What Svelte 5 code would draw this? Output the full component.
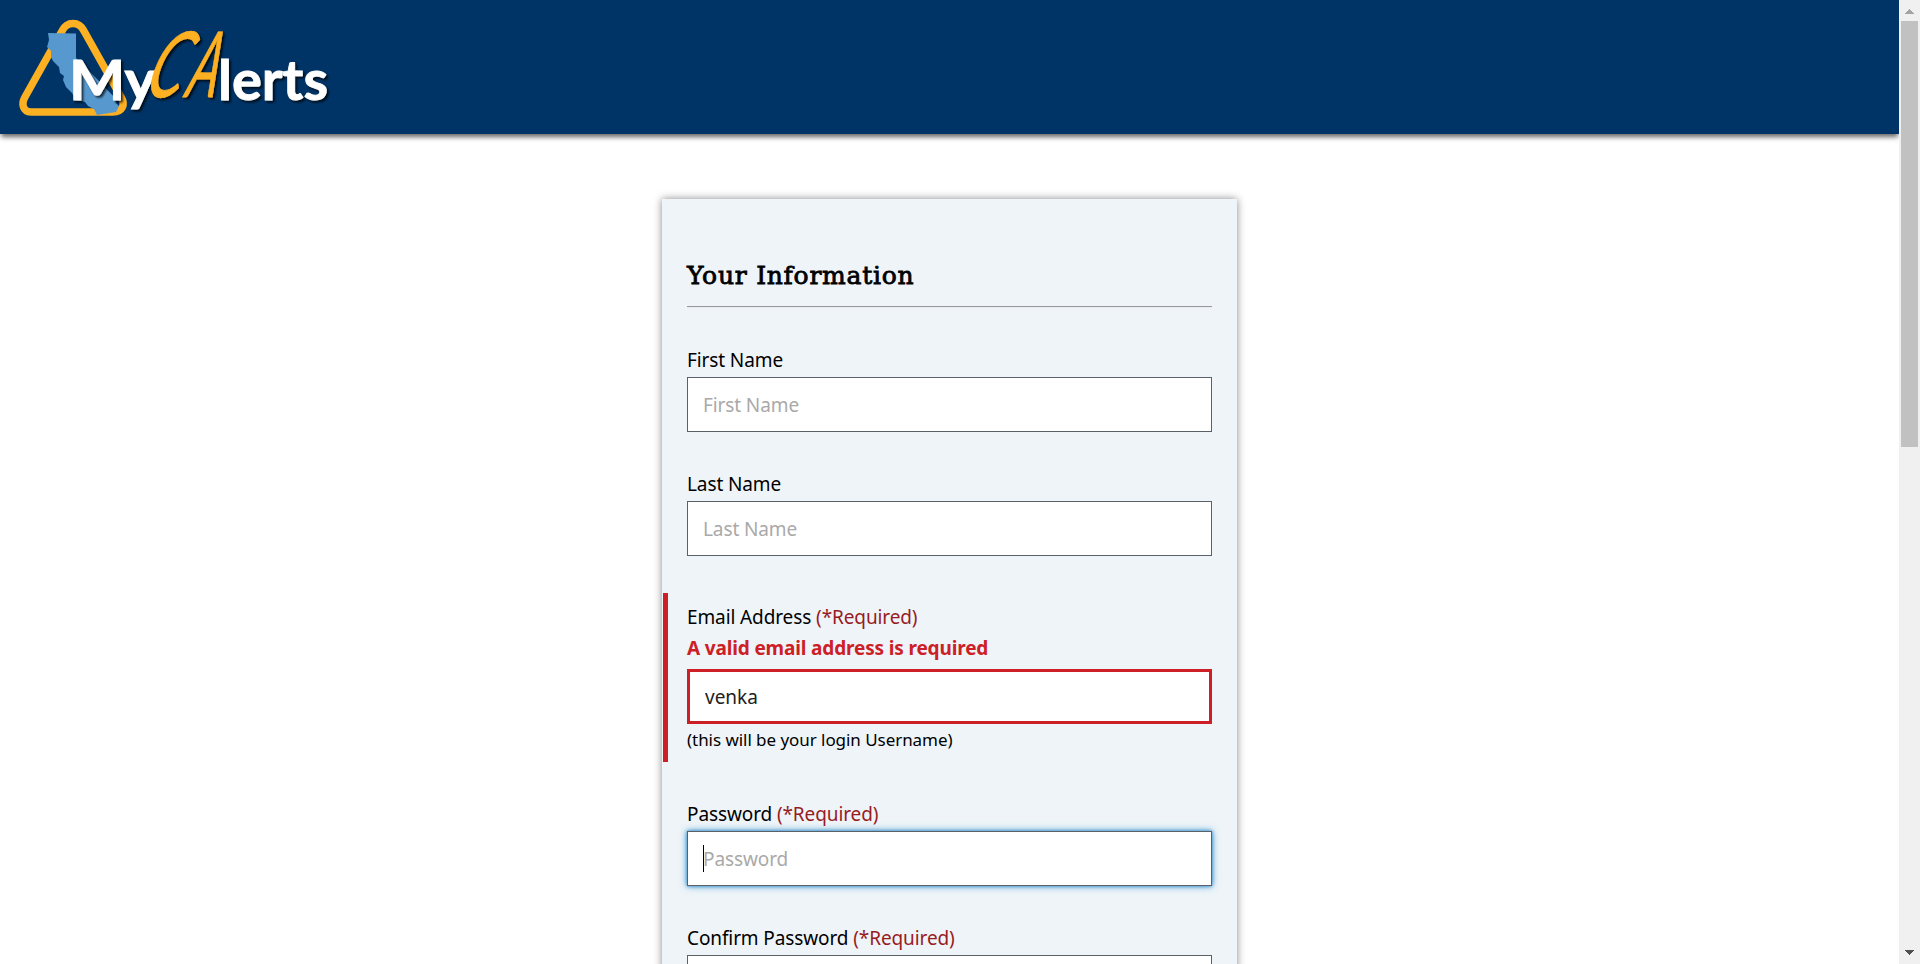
<script>
  const names = ['First Name', 'Last Name'];
</script>

<div class="window">
  <div class="page">
    <header>
      <svg class="logo" width="340" height="134" viewBox="0 0 340 134" role="img" aria-label="MyCAlerts">
        <defs>
          <filter id="drop" x="-10%" y="-10%" width="125%" height="130%">
            <feDropShadow dx="2" dy="2" stdDeviation="1.2" flood-color="#000" flood-opacity=".75" />
          </filter>
        </defs>
        <path class="triangle" d="M62 31C67 21 79 21 84 31L121 97C126 105 122 112 113 112H31C23 112 21 104 25 97Z" />
        <path class="state" d="M48 33L76 33.500V58L97 79L115 98L116 103L119 106L116 112L97 115L94 109L88 106L85 102L76 100L72 93L66 87L63 80L64 76L60 73L59 67L53 61L51 57L51 51L47 47L49 40Z" />
        <g filter="url(#drop)">
          <text class="sans" x="69" y="100" textLength="87" lengthAdjust="spacingAndGlyphs">My</text>
          <g class="script">
            <text transform="translate(142 97) skewX(-20) scale(.64 1)">C</text>
            <text transform="translate(184 97) skewX(-16) scale(.53 1)">A</text>
          </g>
          <text class="sans" x="218" y="100" textLength="110" lengthAdjust="spacingAndGlyphs">lerts</text>
        </g>
      </svg>
    </header>
    <main>
      <form>
        <h1>Your Information</h1>
        <hr />
        {#each names as name}
          <div class="field">
            <label for={name}><span>{name}</span></label>
            <input id={name} type="text" placeholder={name} />
          </div>
        {/each}
        <div class="field error">
          <label for="email"><span>Email Address</span> <span class="required">(*Required)</span></label>
          <strong>A valid email address is required</strong>
          <input id="email" type="text" value="venka" />
          <small>(this will be your login Username)</small>
        </div>
        <div class="field">
          <label for="password"><span>Password</span> <span class="required">(*Required)</span></label>
          <div class="focused">
            <input id="password" type="password" placeholder="Password" />
            <i class="caret"></i>
          </div>
        </div>
        <div class="field">
          <label for="confirm"><span>Confirm Password</span> <span class="required">(*Required)</span></label>
          <input id="confirm" type="password" />
        </div>
      </form>
    </main>
  </div>
  <div class="scrollbar">
    <svg width="21" height="21" viewBox="0 0 21 21" shape-rendering="crispEdges"><path d="M6 14L10.500 9L15 14Z" fill="#a3a3a3" /></svg>
    <div class="thumb"></div>
    <svg class="down" width="21" height="21" viewBox="0 0 21 21" shape-rendering="crispEdges"><path d="M6 7H15L10.500 12Z" fill="#505050" /></svg>
  </div>
</div>

<style>
  :global(body) { margin: 0; overflow: hidden; }
  .window { display: flex; height: 964px; overflow: hidden; background: #fff; font: 19px/30px "Noto Sans", sans-serif; color: #000; }
  .page { flex: 1; overflow: hidden; }
  header { height: 134px; background: #036; box-shadow: 0 4px 5px -1px #666; }
  .logo { display: block; }
  .triangle { fill: none; stroke: #fdb022; stroke-width: 7.5; stroke-linejoin: round; }
  .state { fill: #5799cf; }
  .sans { font: 700 55px Lato, sans-serif; fill: #fff; stroke: #fff; stroke-width: .8; }
  .script { font: italic 400 91px Lato, sans-serif; fill: #fdb022; stroke: #fdb022; stroke-width: .8; }
  main { display: flex; justify-content: center; padding-top: 65px; }
  form { box-sizing: border-box; width: 575px; height: 1400px; padding: 57px 25px 0; background: #eef4f8; box-shadow: 0 0 8px #888; }
  h1 { margin: 0; font: 400 25px/40px "DejaVu Serif", serif; letter-spacing: .75px; -webkit-text-stroke: .8px #000; white-space: nowrap; }
  hr { margin: 10px 0 37px; border: 0; border-top: 1px solid #999; border-bottom: 1px solid #e9ecee; height: 0; }
  .field { display: flex; flex-direction: column; margin-bottom: 37px; }
  label { height: 30px; margin-bottom: 2px; white-space: nowrap; letter-spacing: -.11px; }
  .required { color: #981b1e; }
  input { box-sizing: border-box; width: 100%; height: 55px; margin: 0; padding: 0 15px; border: 1px solid #5b616b; border-radius: 0; outline: 0; background: #fff; font: 19px "Noto Sans", sans-serif; letter-spacing: -.11px; color: #212121; }
  input::placeholder { color: #a9a9a9; opacity: 1; }
  .error { margin-left: -24px; padding: 9px 0 7px 19px; border-left: 5px solid #cd2026; }
  .error label { margin: 0; }
  .error input { border: 3px solid #cd2026; letter-spacing: 0; }
  strong { height: 37px; line-height: 32px; letter-spacing: -.15px; color: #cd2026; white-space: nowrap; }
  small { height: 31px; font-size: 17px; line-height: 32px; letter-spacing: -.05px; white-space: nowrap; }
  .focused { position: relative; height: 55px; box-shadow: 0 0 3px #3e94cf, 0 0 7px #3e94cf; }
  .caret { position: absolute; left: 16px; top: 14px; width: 1px; height: 27px; background: #000; }
  .scrollbar { display: flex; flex-direction: column; width: 21px; background: #f0f0f0; }
  .thumb { width: 17px; height: 426px; margin-left: 2px; background: #c1c1c1; }
  .down { margin-top: auto; }
</style>
